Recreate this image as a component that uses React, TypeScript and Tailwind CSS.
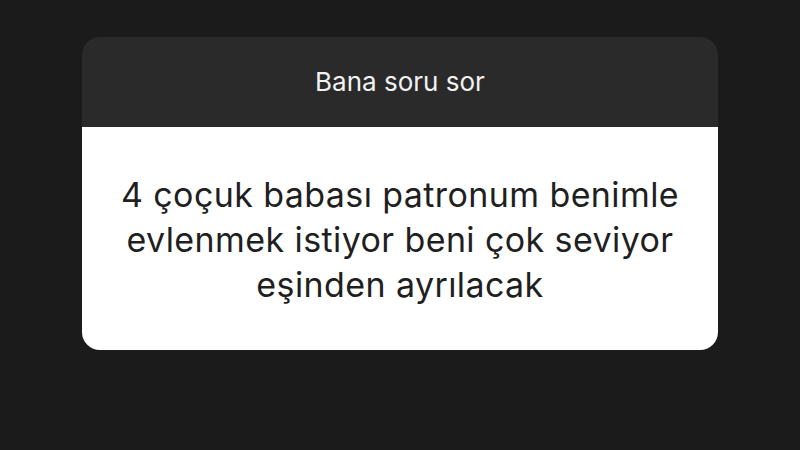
export default function App() {
  return (
    <div
      className="w-full h-[450px] bg-[#1b1b1b] pt-[37px]"
      style={{ fontFamily: 'Inter, "Liberation Sans", sans-serif' }}
    >
      <div className="mx-auto w-[636px] rounded-[18px] overflow-hidden">
        <div className="h-[90px] bg-[#2a2a2a] flex items-center justify-center">
          <span className="text-[26px] text-[#f2f2f2] pb-[1px]">Bana soru sor</span>
        </div>
        <div className="h-[223px] bg-white flex items-center justify-center px-4 pt-[2px]">
          <p className="text-center text-[34px] leading-[45px] text-[#1f1f1f] tracking-[0.4px]">
            4 çoçuk babası patronum benimle
            <br />
            evlenmek istiyor beni çok seviyor
            <br />
            eşinden ayrılacak
          </p>
        </div>
      </div>
    </div>
  );
}
